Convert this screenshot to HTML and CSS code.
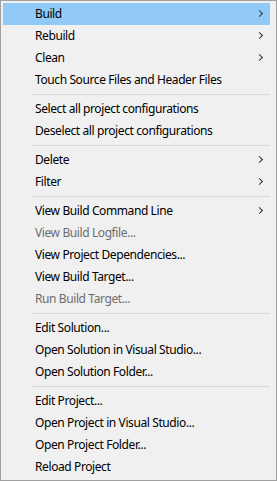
FILE: index.html
```html
<!DOCTYPE html>
<html lang="en">
<head>
    <meta charset="UTF-8">
    <title>Project Menu</title>
    <link rel="stylesheet" href="styles.css">
</head>
<body>
    <div class="menu">
        <div class="item active">Build<span class="arrow"></span></div>
        <div class="item">Rebuild<span class="arrow"></span></div>
        <div class="item">Clean<span class="arrow"></span></div>
        <div class="item">Touch Source Files and Header Files</div>
        <div class="sep"></div>
        <div class="item">Select all project configurations</div>
        <div class="item">Deselect all project configurations</div>
        <div class="sep"></div>
        <div class="item">Delete<span class="arrow"></span></div>
        <div class="item">Filter<span class="arrow"></span></div>
        <div class="sep"></div>
        <div class="item">View Build Command Line<span class="arrow"></span></div>
        <div class="item disabled">View Build Logfile...</div>
        <div class="item">View Project Dependencies...</div>
        <div class="item">View Build Target...</div>
        <div class="item disabled">Run Build Target...</div>
        <div class="sep"></div>
        <div class="item">Edit Solution...</div>
        <div class="item">Open Solution in Visual Studio...</div>
        <div class="item">Open Solution Folder...</div>
        <div class="sep"></div>
        <div class="item">Edit Project...</div>
        <div class="item">Open Project in Visual Studio...</div>
        <div class="item">Open Project Folder...</div>
        <div class="item">Reload Project</div>
    </div>
</body>
</html>
```

FILE: styles.css
```css
body {
    margin: 0;
    font-family: "Noto Sans", "Open Sans", sans-serif;
    font-size: 12px;
    background: #f0f0f0;
}
.menu {
    width: 277px;
    height: 481px;
    box-sizing: border-box;
    border: 1px solid #a0a0a0;
    background: #f0f0f0;
    padding: 2px 6px 2px 2px;
    color: #000;
}
.item {
    position: relative;
    height: 22px;
    line-height: 22px;
    padding-left: 32px;
    white-space: nowrap;
    letter-spacing: -0.4px;
}
.item.active {
    background: #91c9f7;
}
.item.disabled {
    color: #6d6d6d;
}
.arrow {
    position: absolute;
    right: 8px;
    top: 8px;
    width: 4px;
    height: 4px;
    border-top: 1px solid #333;
    border-right: 1px solid #333;
    transform: rotate(45deg);
}
.sep {
    height: 1px;
    background: #d7d7d7;
    margin: 3px 0 3px 28px;
}
```
